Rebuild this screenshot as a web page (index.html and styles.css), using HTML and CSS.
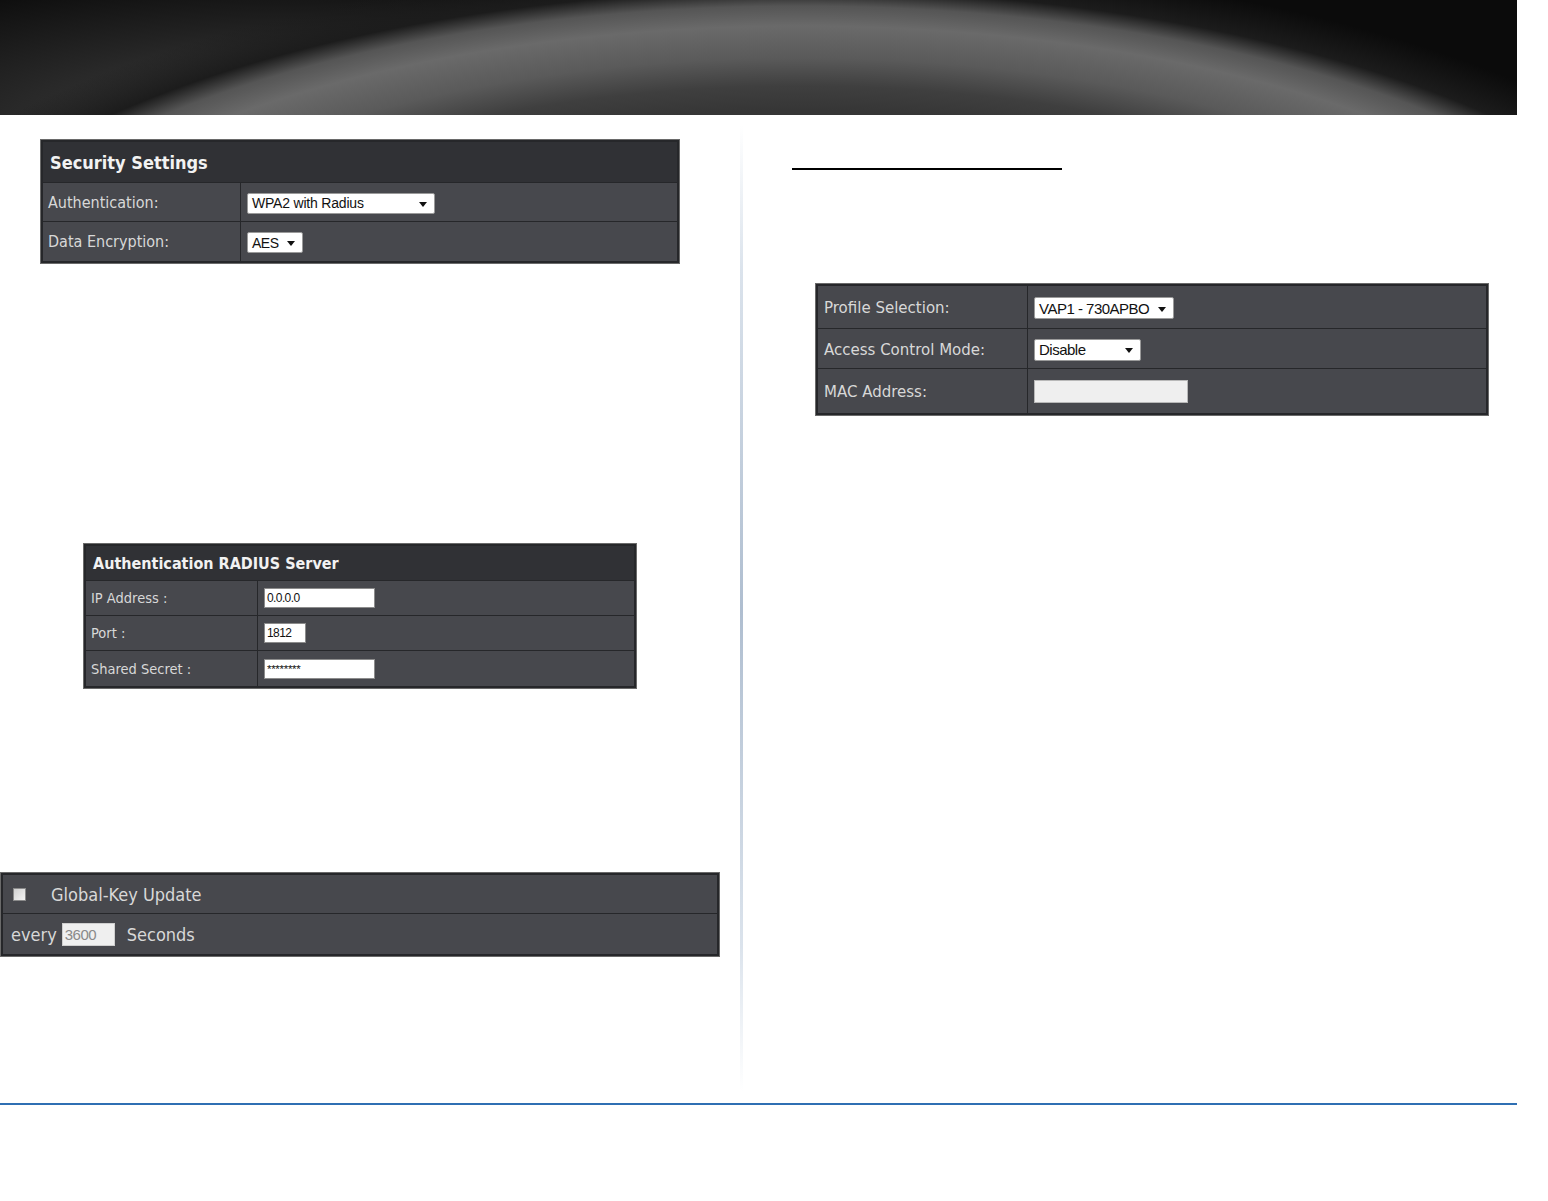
FILE: index.html
```html
<!DOCTYPE html>
<html>
<head>
<meta charset="utf-8">
<title>Security Settings</title>
<link rel="stylesheet" href="styles.css">
</head>
<body>
<div class="banner"></div>
<div class="main">
  <div class="col-left">
    <div class="panel panel-sec">
      <div class="ph">Security Settings</div>
      <div class="lbl">Authentication:</div>
      <div class="val"><div class="sel sel-auth"><span>WPA2 with Radius</span><svg width="8" height="5" viewBox="0 0 8 5"><path d="M0 0H8L4 5Z" fill="#111"/></svg></div></div>
      <div class="lbl">Data Encryption:</div>
      <div class="val"><div class="sel sel-aes"><span>AES</span><svg width="8" height="5" viewBox="0 0 8 5"><path d="M0 0H8L4 5Z" fill="#111"/></svg></div></div>
    </div>

    <div class="panel panel-rad">
      <div class="ph">Authentication RADIUS Server</div>
      <div class="lbl">IP Address :</div>
      <div class="val"><div class="inp inp-ip">0.0.0.0</div></div>
      <div class="lbl">Port :</div>
      <div class="val"><div class="inp inp-port">1812</div></div>
      <div class="lbl">Shared Secret :</div>
      <div class="val"><div class="inp inp-ip inp-secret">********</div></div>
    </div>

    <div class="panel panel-key">
      <div class="krow"><span class="chk"></span><span class="ktxt">Global-Key Update</span></div>
      <div class="krow"><span>every</span><span class="inp inp-sec">3600</span><span class="ksec">Seconds</span></div>
    </div>
  </div>
  <div class="divider"></div>
  <div class="col-right">
    <div class="rule"></div>
    <div class="panel panel-acl">
      <div class="lbl">Profile Selection:</div>
      <div class="val"><div class="sel sel-vap"><span>VAP1 - 730APBO</span><svg width="8" height="5" viewBox="0 0 8 5"><path d="M0 0H8L4 5Z" fill="#111"/></svg></div></div>
      <div class="lbl">Access Control Mode:</div>
      <div class="val"><div class="sel sel-dis"><span>Disable</span><svg width="8" height="5" viewBox="0 0 8 5"><path d="M0 0H8L4 5Z" fill="#111"/></svg></div></div>
      <div class="lbl">MAC Address:</div>
      <div class="val"><div class="inp inp-mac"></div></div>
    </div>
  </div>
</div>
<div class="footline"></div>
</body>
</html>
```
FILE: styles.css
```css
html, body {
  margin: 0;
  padding: 0;
  background: #ffffff;
}
body {
  width: 1548px;
  font-family: "DejaVu Sans", Verdana, sans-serif;
}
.banner {
  width: 1517px;
  height: 115px;
  background:
    radial-gradient(950px 400px at 800px 390px, #333333 0%, #363636 70%, #3f3f3f 76%, #5a5a5a 83%, #6a6a6a 91%, #555555 96%, #1c1c1c 100%, rgba(11,11,11,0) 108%),
    radial-gradient(560px 170px at 280px 135px, rgba(62,62,62,1) 0%, rgba(48,48,48,0.8) 50%, rgba(11,11,11,0) 100%),
    #0b0b0b;
}
.main {
  display: flex;
  height: 988px;
}
.col-left {
  width: 740px;
  display: flex;
  flex-direction: column;
  align-items: flex-start;
}
.divider {
  width: 3px;
  margin: 10px 0 12px 0;
  background: linear-gradient(to bottom, rgba(190,205,222,0) 0%, #dbe3ec 15%, #afbed0 50%, #dbe3ec 85%, rgba(190,205,222,0) 100%);
}
.col-right {
  flex: 1;
  display: flex;
  flex-direction: column;
  align-items: flex-start;
}
.footline {
  width: 1517px;
  height: 2px;
  background: #2f6fb3;
}

/* panels */
.panel {
  display: grid;
  gap: 1px;
  background: #26272a;
  border: 1px solid #6a6a6a;
  padding: 2px;
  box-sizing: border-box;
}
.ph {
  grid-column: 1 / -1;
  background: #303135;
  color: #f2f2f2;
  font-weight: bold;
  display: flex;
  align-items: center;
  font-stretch: condensed;
}
.lbl, .val {
  background: #47484d;
  display: flex;
  align-items: center;
}
.lbl {
  color: #d8d8d8;
  font-stretch: condensed;
}
.val {
  padding-left: 6px;
}

.panel-sec {
  margin: 24px 0 0 40px;
  width: 640px;
  grid-template-columns: 197px 1fr;
  grid-template-rows: 40px 38px 39px;
}
.panel-sec .ph { font-size: 18px; padding-left: 7px; }
.panel-sec .lbl { font-size: 16px; padding-left: 5px; }
.panel-sec .sel { margin-top: 2px; }

.panel-rad {
  margin: 279px 0 0 83px;
  width: 554px;
  grid-template-columns: 171px 1fr;
  grid-template-rows: 34px 34px 34px 35px;
}
.panel-rad .ph { font-size: 16px; padding-left: 7px; }
.panel-rad .lbl { font-size: 14.5px; padding-left: 5px; }

.panel-key {
  margin: 183px 0 0 0;
  width: 720px;
  grid-template-rows: 38px 40px;
}
.krow {
  background: #47484d;
  color: #d8d8d8;
  display: flex;
  align-items: center;
  font-size: 18px;
  font-stretch: condensed;
  padding-left: 8px;
}
.chk {
  width: 11px;
  height: 11px;
  border: 1px solid #8a8a8a;
  background: linear-gradient(135deg, #d0d0d0, #f4f4f4);
  margin: 0 25px 0 2px;
}
.inp-sec {
  width: 53px;
  height: 23px;
  margin: 0 12px 0 5px;
}

.rule {
  width: 270px;
  height: 2px;
  background: #000;
  margin: 53px 0 0 49px;
}
.panel-acl {
  margin: 113px 0 0 72px;
  width: 674px;
  grid-template-columns: 209px 1fr;
  grid-template-rows: 42px 39px 44px;
}
.panel-acl .lbl { font-size: 16.7px; padding-left: 6px; }
.panel-acl .sel { margin-top: 2px; }

/* controls */
.sel {
  background: #fff;
  border: 1px solid #9a9a9a;
  border-radius: 2px;
  box-sizing: border-box;
  display: flex;
  align-items: center;
  justify-content: space-between;
  padding: 0 7px 0 4px;
  font-family: "Liberation Sans", Arial, sans-serif;
  color: #111;
  letter-spacing: -0.5px;
}
.sel svg { flex: none; margin-top: 2px; }
.sel-auth { width: 188px; height: 21px; font-size: 14px; letter-spacing: -0.2px; }
.sel-aes { width: 56px; height: 21px; font-size: 14px; }
.sel-vap { width: 140px; height: 22px; font-size: 15px; }
.sel-dis { width: 107px; height: 22px; font-size: 15px; }

.inp {
  background: #fff;
  border: 1px solid #8c8c8c;
  box-sizing: border-box;
  display: flex;
  align-items: center;
  padding-left: 2px;
  font-family: "Liberation Sans", Arial, sans-serif;
  font-size: 12px;
  letter-spacing: -0.6px;
  color: #111;
}
.inp-ip { width: 111px; height: 20px; }
.inp-port { width: 42px; height: 20px; }
.inp.inp-secret { font-size: 11.5px; letter-spacing: -0.3px; }
.inp-mac { width: 154px; height: 23px; background: #efefef; border-color: #b8b8b8; }
.inp.inp-sec { font-size: 15px; letter-spacing: -0.5px; color: #8a8a8a; background: #efefef; border-color: #cfcfcf; }
```
